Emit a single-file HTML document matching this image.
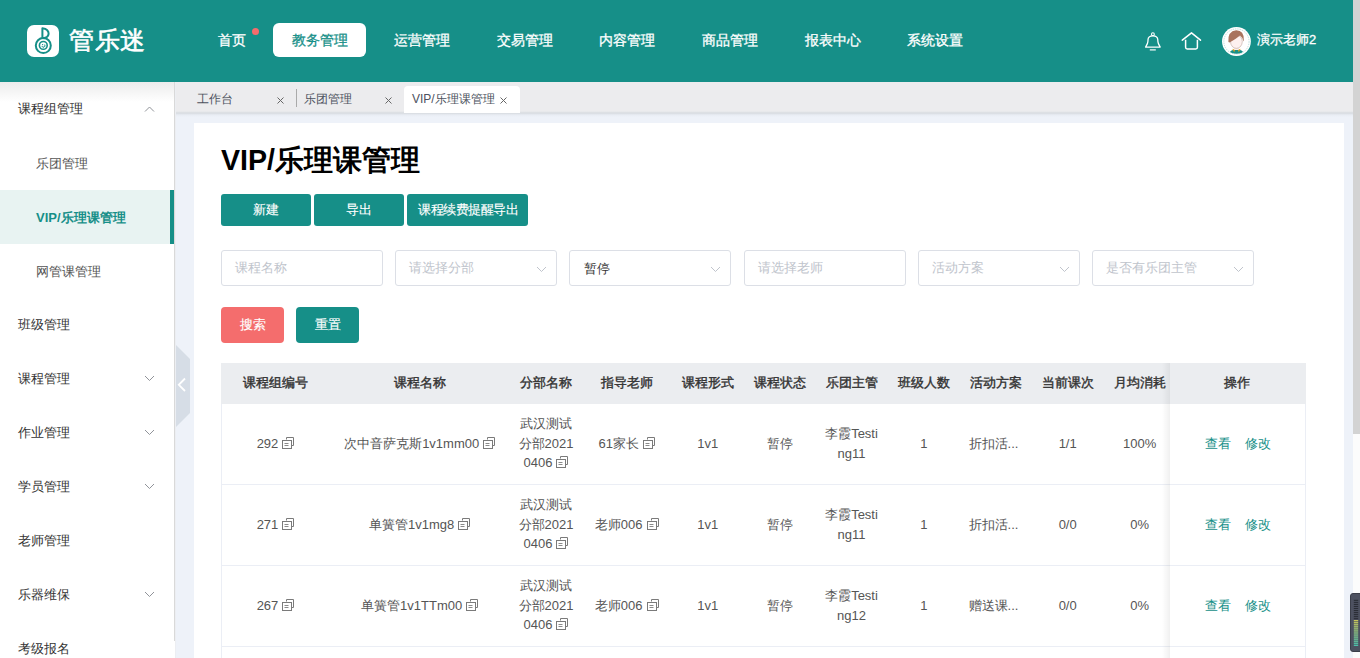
<!DOCTYPE html>
<html><head><meta charset="utf-8"><style>
*{box-sizing:border-box;margin:0;padding:0}
html,body{width:1360px;height:658px;overflow:hidden;background:#fff;font-family:"Liberation Sans",sans-serif;color:#333}
.a{position:absolute;white-space:nowrap}
.t{position:absolute;white-space:nowrap;line-height:16px}
</style></head><body>
<div class="a" style="left:0;top:0;width:1353px;height:82px;background:#168f88"></div>
<div class="a" style="left:27px;top:25px;width:32px;height:32px;background:#fff;border-radius:7px"></div>
<svg class="a" style="left:27px;top:25px" width="32" height="32" viewBox="0 0 32 32">
<circle cx="16.3" cy="20.6" r="7.5" fill="none" stroke="#168f88" stroke-width="2"/>
<circle cx="16.3" cy="20.4" r="3.9" fill="none" stroke="#168f88" stroke-width="1.6"/>
<path d="M14.9 21.3 A1.6 1.6 0 0 0 17.9 19.9" fill="none" stroke="#168f88" stroke-width="1" stroke-linecap="round"/>
<circle cx="15.6" cy="19.6" r="0.7" fill="#168f88"/>
<path d="M15.4 13 V3.2 Q21.8 4.2 21.6 8.8 Q21.2 12.6 16.2 13.2" fill="none" stroke="#168f88" stroke-width="2" stroke-linejoin="round"/>
</svg>
<div class="a" style="left:69px;top:22px;font-size:25px;font-weight:normal;-webkit-text-stroke:0.6px #fff;color:#fff;line-height:36px;letter-spacing:0.5px">管乐迷</div>
<div class="a" style="left:273px;top:23px;width:93px;height:34px;background:#fff;border-radius:6px"></div>
<div class="a" style="left:252px;top:28px;width:7px;height:7px;border-radius:50%;background:#f56c6c"></div>
<div class="t" style="left:217.5px;top:31.5px;font-size:14px;font-weight:normal;-webkit-text-stroke:0.3px currentColor;color:#fff;color:#fff">首页</div>
<div class="t" style="left:291.5px;top:31.5px;font-size:14px;font-weight:normal;-webkit-text-stroke:0.3px currentColor;color:#fff;color:#168f88">教务管理</div>
<div class="t" style="left:393.5px;top:31.5px;font-size:14px;font-weight:normal;-webkit-text-stroke:0.3px currentColor;color:#fff;color:#fff">运营管理</div>
<div class="t" style="left:496.5px;top:31.5px;font-size:14px;font-weight:normal;-webkit-text-stroke:0.3px currentColor;color:#fff;color:#fff">交易管理</div>
<div class="t" style="left:598.5px;top:31.5px;font-size:14px;font-weight:normal;-webkit-text-stroke:0.3px currentColor;color:#fff;color:#fff">内容管理</div>
<div class="t" style="left:701.5px;top:31.5px;font-size:14px;font-weight:normal;-webkit-text-stroke:0.3px currentColor;color:#fff;color:#fff">商品管理</div>
<div class="t" style="left:804.5px;top:31.5px;font-size:14px;font-weight:normal;-webkit-text-stroke:0.3px currentColor;color:#fff;color:#fff">报表中心</div>
<div class="t" style="left:906.5px;top:31.5px;font-size:14px;font-weight:normal;-webkit-text-stroke:0.3px currentColor;color:#fff;color:#fff">系统设置</div>
<svg class="a" style="left:1143px;top:31px" width="20" height="22" viewBox="0 0 20 22">
<path d="M2.6 16.1 H17.2 L15.4 12.6 Q14.8 10.9 14.8 9.2 V8.8 Q14.6 4.9 9.9 4.9 Q5.2 4.9 5 8.8 V9.2 Q5 10.9 4.4 12.6 Z" fill="none" stroke="#fff" stroke-width="1.3" stroke-linejoin="round"/>
<circle cx="9.9" cy="3.2" r="1.4" fill="none" stroke="#fff" stroke-width="1.1"/>
<path d="M6.8 18.9 H12.8" stroke="#fff" stroke-width="1.2"/>
</svg>
<svg class="a" style="left:1180px;top:31px" width="23" height="21" viewBox="0 0 23 21">
<path d="M2.3 9.2 L11.5 1.8 L20.5 9.2" fill="none" stroke="#fff" stroke-width="1.5" stroke-linejoin="round" stroke-linecap="round"/>
<path d="M5.6 8.8 V16.3 Q5.6 17.9 7.2 17.9 H15.8 Q17.4 17.9 17.4 16.3 V8.8" fill="none" stroke="#fff" stroke-width="1.5"/>
</svg>
<svg class="a" style="left:1221px;top:26px" width="31" height="31" viewBox="0 0 31 31">
<defs><clipPath id="cp"><circle cx="15.5" cy="15.5" r="12.2"/></clipPath></defs>
<circle cx="15.45" cy="15.5" r="14.4" fill="#fff"/>
<circle cx="15.45" cy="15.5" r="12.6" fill="none" stroke="#7fbdb8" stroke-width="0.5" stroke-dasharray="1.4 0.9"/>
<g clip-path="url(#cp)">
<path d="M7.5 28 Q9.5 23.6 15.5 23.6 Q21.5 23.6 23.5 28 L23.5 31 H7.5 Z" fill="#168f88"/>
<rect x="12.8" y="19.5" width="5" height="4.5" fill="#fbeeea"/>
<path d="M11.8 23.2 L13.6 24.2 L13.2 25.6 Z M19.2 23.2 L17.4 24.2 L17.8 25.6 Z" fill="#e2a21c" stroke="#e2a21c" stroke-width="0.6"/>
<ellipse cx="15.4" cy="15.6" rx="5.9" ry="6.8" fill="#fdf1ef" stroke="#8d6e63" stroke-width="0.35"/>
<path d="M7.4 16 Q6.4 5.2 15.2 4.2 Q23.2 4.4 22.8 14 L22.4 15.6 Q21.6 11.2 19 9.6 Q15.5 12.8 8.6 16.4 Z" fill="#a9735d"/>
</g>
</svg>
<div class="t" style="left:1257px;top:32px;font-size:13px;font-weight:normal;-webkit-text-stroke:0.3px #fff;color:#fff">演示老师2</div>
<div class="a" style="left:1353px;top:0;width:7px;height:658px;background:#fcfcfc"></div>
<div class="a" style="left:1353px;top:0;width:7px;height:434px;background:#d3d3d3"></div>
<div class="a" style="left:0;top:82px;width:176px;height:576px;background:#fff;border-right:1px solid #eceef2"></div>
<div class="a" style="left:174px;top:82px;width:1.3px;height:559px;background:#d9d9d9"></div>
<div class="a" style="left:0;top:82px;width:174px;height:20px;background:linear-gradient(#ececec,#fff)"></div>
<div class="a" style="left:0;top:190px;width:170px;height:54px;background:#e8f3f2"></div>
<div class="a" style="left:170px;top:190px;width:4px;height:54px;background:#168f88"></div>
<div class="t" style="left:18px;top:101px;font-size:13px;color:#333;font-weight:normal">课程组管理</div>
<svg class="a" style="left:144px;top:106px" width="11" height="7" viewBox="0 0 11 7"><path d="M1 5.5 L5.5 1 L10 5.5" fill="none" stroke="#909399" stroke-width="1"/></svg>
<div class="t" style="left:36px;top:156px;font-size:13px;color:#555;font-weight:normal">乐团管理</div>
<div class="t" style="left:36px;top:210px;font-size:13px;color:#168f88;font-weight:bold">VIP/乐理课管理</div>
<div class="t" style="left:36px;top:264px;font-size:13px;color:#555;font-weight:normal">网管课管理</div>
<div class="t" style="left:18px;top:317px;font-size:13px;color:#333;font-weight:normal">班级管理</div>
<div class="t" style="left:18px;top:371px;font-size:13px;color:#333;font-weight:normal">课程管理</div>
<svg class="a" style="left:144px;top:375px" width="11" height="7" viewBox="0 0 11 7"><path d="M1 1 L5.5 5.5 L10 1" fill="none" stroke="#909399" stroke-width="1"/></svg>
<div class="t" style="left:18px;top:425px;font-size:13px;color:#333;font-weight:normal">作业管理</div>
<svg class="a" style="left:144px;top:429px" width="11" height="7" viewBox="0 0 11 7"><path d="M1 1 L5.5 5.5 L10 1" fill="none" stroke="#909399" stroke-width="1"/></svg>
<div class="t" style="left:18px;top:479px;font-size:13px;color:#333;font-weight:normal">学员管理</div>
<svg class="a" style="left:144px;top:483px" width="11" height="7" viewBox="0 0 11 7"><path d="M1 1 L5.5 5.5 L10 1" fill="none" stroke="#909399" stroke-width="1"/></svg>
<div class="t" style="left:18px;top:533px;font-size:13px;color:#333;font-weight:normal">老师管理</div>
<div class="t" style="left:18px;top:587px;font-size:13px;color:#333;font-weight:normal">乐器维保</div>
<svg class="a" style="left:144px;top:591px" width="11" height="7" viewBox="0 0 11 7"><path d="M1 1 L5.5 5.5 L10 1" fill="none" stroke="#909399" stroke-width="1"/></svg>
<div class="t" style="left:18px;top:641px;font-size:13px;color:#333;font-weight:normal">考级报名</div>
<div class="a" style="left:176px;top:82px;width:1177px;height:31px;background:#ececee"></div>
<div class="a" style="left:176px;top:113px;width:1177px;height:545px;background:#eef2f9"></div>
<div class="a" style="left:176px;top:111px;width:1177px;height:6px;background:linear-gradient(#ebecee 0px,#e4e6e9 1px,#d6dadf 2px,#e0e4ea 3px,#e9edf4 4px,#eef2f9 6px)"></div>
<div class="a" style="left:404px;top:86px;width:116px;height:27px;background:#fff;border-radius:4px 4px 0 0"></div>
<div class="t" style="left:197px;top:91px;font-size:12px;color:#4c5260">工作台</div>
<div class="t" style="left:304px;top:91px;font-size:12px;color:#4c5260">乐团管理</div>
<div class="t" style="left:412px;top:91px;font-size:12px;color:#4c5260">VIP/乐理课管理</div>
<svg class="a" style="left:277px;top:97px" width="7" height="7" viewBox="0 0 7 7"><path d="M0.5 0.5 L6.5 6.5 M6.5 0.5 L0.5 6.5" stroke="#666" stroke-width="1"/></svg>
<svg class="a" style="left:385px;top:97px" width="7" height="7" viewBox="0 0 7 7"><path d="M0.5 0.5 L6.5 6.5 M6.5 0.5 L0.5 6.5" stroke="#666" stroke-width="1"/></svg>
<svg class="a" style="left:500px;top:97px" width="7" height="7" viewBox="0 0 7 7"><path d="M0.5 0.5 L6.5 6.5 M6.5 0.5 L0.5 6.5" stroke="#666" stroke-width="1"/></svg>
<div class="a" style="left:296px;top:89px;width:1px;height:18px;background:#aaa"></div>
<svg class="a" style="left:176px;top:345px" width="15" height="82" viewBox="0 0 15 82"><path d="M0 0 L14 14 V68 L0 82 Z" fill="#d6dde6"/><path d="M9 33.5 L2.8 39.8 L9 46" fill="none" stroke="#fff" stroke-width="1.8"/></svg>
<div class="a" style="left:194px;top:123px;width:1150px;height:535px;background:#fff"></div>
<div class="a" style="left:221px;top:140px;font-size:28.6px;font-weight:bold;color:#000;line-height:40px">VIP/乐理课管理</div>
<div class="a" style="left:221px;top:194px;width:90px;height:32px;background:#168f88;border-radius:3px;color:#fff;-webkit-text-stroke:0.15px #fff;font-size:13px;letter-spacing:0;text-indent:0;line-height:32px;text-align:center">新建</div>
<div class="a" style="left:314px;top:194px;width:90px;height:32px;background:#168f88;border-radius:3px;color:#fff;-webkit-text-stroke:0.15px #fff;font-size:13px;letter-spacing:0;text-indent:0;line-height:32px;text-align:center">导出</div>
<div class="a" style="left:407px;top:194px;width:121px;height:32px;background:#168f88;border-radius:3px;color:#fff;-webkit-text-stroke:0.15px #fff;font-size:13px;letter-spacing:-0.5px;text-indent:1.5px;line-height:32px;text-align:center">课程续费提醒导出</div>
<div class="a" style="left:221.0px;top:250px;width:162px;height:36px;border:1px solid #dcdfe6;border-radius:3px;background:#fff"></div>
<div class="t" style="left:235.0px;top:260px;font-size:13px;color:#c0c4cc">课程名称</div>
<div class="a" style="left:395.0px;top:250px;width:162px;height:36px;border:1px solid #dcdfe6;border-radius:3px;background:#fff"></div>
<div class="t" style="left:409.0px;top:260px;font-size:13px;color:#c0c4cc">请选择分部</div>
<svg class="a" style="left:536.0px;top:266px" width="11" height="7" viewBox="0 0 11 7"><path d="M1 1 L5.5 5.5 L10 1" fill="none" stroke="#c0c4cc" stroke-width="1"/></svg>
<div class="a" style="left:569.0px;top:250px;width:162px;height:36px;border:1px solid #dcdfe6;border-radius:3px;background:#fff"></div>
<div class="t" style="left:584.0px;top:260.5px;font-size:13px;color:#333">暂停</div>
<svg class="a" style="left:710.0px;top:266px" width="11" height="7" viewBox="0 0 11 7"><path d="M1 1 L5.5 5.5 L10 1" fill="none" stroke="#c0c4cc" stroke-width="1"/></svg>
<div class="a" style="left:744.0px;top:250px;width:162px;height:36px;border:1px solid #dcdfe6;border-radius:3px;background:#fff"></div>
<div class="t" style="left:758.0px;top:260px;font-size:13px;color:#c0c4cc">请选择老师</div>
<div class="a" style="left:918.0px;top:250px;width:162px;height:36px;border:1px solid #dcdfe6;border-radius:3px;background:#fff"></div>
<div class="t" style="left:932.0px;top:260px;font-size:13px;color:#c0c4cc">活动方案</div>
<svg class="a" style="left:1059.0px;top:266px" width="11" height="7" viewBox="0 0 11 7"><path d="M1 1 L5.5 5.5 L10 1" fill="none" stroke="#c0c4cc" stroke-width="1"/></svg>
<div class="a" style="left:1092.0px;top:250px;width:162px;height:36px;border:1px solid #dcdfe6;border-radius:3px;background:#fff"></div>
<div class="t" style="left:1106.0px;top:260px;font-size:13px;color:#c0c4cc">是否有乐团主管</div>
<svg class="a" style="left:1233.0px;top:266px" width="11" height="7" viewBox="0 0 11 7"><path d="M1 1 L5.5 5.5 L10 1" fill="none" stroke="#c0c4cc" stroke-width="1"/></svg>
<div class="a" style="left:221px;top:307px;width:63px;height:36px;background:#f46d6d;border-radius:4px;color:#fff;-webkit-text-stroke:0.15px #fff;font-size:13px;line-height:36px;text-align:center">搜索</div>
<div class="a" style="left:296px;top:307px;width:63px;height:36px;background:#168f88;border-radius:4px;color:#fff;-webkit-text-stroke:0.15px #fff;font-size:13px;line-height:36px;text-align:center">重置</div>
<div class="a" style="left:221px;top:363px;width:1085px;height:41px;background:#ebedf0"></div>
<div class="a" style="left:221px;top:404px;width:1px;height:254px;background:#ebeef5"></div>
<div class="a" style="left:1305px;top:404px;width:1px;height:254px;background:#ebeef5"></div>
<div class="a" style="left:221px;top:484px;width:1085px;height:1px;background:#ebeef5"></div>
<div class="a" style="left:221px;top:565px;width:1085px;height:1px;background:#ebeef5"></div>
<div class="a" style="left:221px;top:646px;width:1085px;height:1px;background:#ebeef5"></div>
<div class="t" style="left:225.5px;top:375px;width:100px;font-size:13px;font-weight:normal;-webkit-text-stroke:0.4px #333;color:#333;text-align:center">课程组编号</div>
<div class="t" style="left:369.7px;top:375px;width:100px;font-size:13px;font-weight:normal;-webkit-text-stroke:0.4px #333;color:#333;text-align:center">课程名称</div>
<div class="t" style="left:496px;top:375px;width:100px;font-size:13px;font-weight:normal;-webkit-text-stroke:0.4px #333;color:#333;text-align:center">分部名称</div>
<div class="t" style="left:576.7px;top:375px;width:100px;font-size:13px;font-weight:normal;-webkit-text-stroke:0.4px #333;color:#333;text-align:center">指导老师</div>
<div class="t" style="left:657.7px;top:375px;width:100px;font-size:13px;font-weight:normal;-webkit-text-stroke:0.4px #333;color:#333;text-align:center">课程形式</div>
<div class="t" style="left:730px;top:375px;width:100px;font-size:13px;font-weight:normal;-webkit-text-stroke:0.4px #333;color:#333;text-align:center">课程状态</div>
<div class="t" style="left:801.5px;top:375px;width:100px;font-size:13px;font-weight:normal;-webkit-text-stroke:0.4px #333;color:#333;text-align:center">乐团主管</div>
<div class="t" style="left:873.8px;top:375px;width:100px;font-size:13px;font-weight:normal;-webkit-text-stroke:0.4px #333;color:#333;text-align:center">班级人数</div>
<div class="t" style="left:945.5px;top:375px;width:100px;font-size:13px;font-weight:normal;-webkit-text-stroke:0.4px #333;color:#333;text-align:center">活动方案</div>
<div class="t" style="left:1017.7px;top:375px;width:100px;font-size:13px;font-weight:normal;-webkit-text-stroke:0.4px #333;color:#333;text-align:center">当前课次</div>
<div class="t" style="left:1089.7px;top:375px;width:100px;font-size:13px;font-weight:normal;-webkit-text-stroke:0.4px #333;color:#333;text-align:center">月均消耗</div>
<div class="a" style="left:1162px;top:363px;width:8px;height:295px;background:linear-gradient(90deg,rgba(0,0,0,0),rgba(0,0,0,0.06))"></div>
<div class="a" style="left:1170px;top:363px;width:136px;height:41px;background:#ebedf0"></div>
<div class="a" style="left:1170px;top:404px;width:135px;height:254px;background:#fff"></div>
<div class="a" style="left:1170px;top:484px;width:136px;height:1px;background:#ebeef5"></div>
<div class="a" style="left:1170px;top:565px;width:136px;height:1px;background:#ebeef5"></div>
<div class="a" style="left:1170px;top:646px;width:136px;height:1px;background:#ebeef5"></div>
<div class="t" style="left:1187px;top:375px;width:100px;font-size:13px;font-weight:normal;-webkit-text-stroke:0.4px #333;color:#333;text-align:center">操作</div>
<div class="t" style="left:215.5px;top:436px;width:120px;font-size:13px;color:#555;text-align:center">292<svg width="12" height="12" viewBox="0 0 12 12" style="display:inline-block;vertical-align:-1px;margin-left:4px"><path d="M4.5 2.5 V0.5 H11.5 V8.5 H9.5" fill="none" stroke="#7a7a7a" stroke-width="1"/><rect x="0.5" y="3.5" width="9" height="8" fill="#fff" stroke="#7a7a7a" stroke-width="1"/><path d="M2.5 6.5 H6.5 M2.5 8.5 H6.5" stroke="#8a8a8a" stroke-width="1"/></svg></div>
<div class="t" style="left:329.7px;top:436px;width:180px;font-size:13px;color:#555;text-align:center">次中音萨克斯1v1mm00<svg width="12" height="12" viewBox="0 0 12 12" style="display:inline-block;vertical-align:-1px;margin-left:4px"><path d="M4.5 2.5 V0.5 H11.5 V8.5 H9.5" fill="none" stroke="#7a7a7a" stroke-width="1"/><rect x="0.5" y="3.5" width="9" height="8" fill="#fff" stroke="#7a7a7a" stroke-width="1"/><path d="M2.5 6.5 H6.5 M2.5 8.5 H6.5" stroke="#8a8a8a" stroke-width="1"/></svg></div>
<div class="a" style="left:501px;top:414px;width:90px;font-size:13px;color:#555;text-align:center;line-height:19.6px">武汉测试<br>分部2021<br>0406<svg width="12" height="12" viewBox="0 0 12 12" style="display:inline-block;vertical-align:-1px;margin-left:4px"><path d="M4.5 2.5 V0.5 H11.5 V8.5 H9.5" fill="none" stroke="#7a7a7a" stroke-width="1"/><rect x="0.5" y="3.5" width="9" height="8" fill="#fff" stroke="#7a7a7a" stroke-width="1"/><path d="M2.5 6.5 H6.5 M2.5 8.5 H6.5" stroke="#8a8a8a" stroke-width="1"/></svg></div>
<div class="t" style="left:581.7px;top:436px;width:90px;font-size:13px;color:#555;text-align:center">61家长<svg width="12" height="12" viewBox="0 0 12 12" style="display:inline-block;vertical-align:-1px;margin-left:4px"><path d="M4.5 2.5 V0.5 H11.5 V8.5 H9.5" fill="none" stroke="#7a7a7a" stroke-width="1"/><rect x="0.5" y="3.5" width="9" height="8" fill="#fff" stroke="#7a7a7a" stroke-width="1"/><path d="M2.5 6.5 H6.5 M2.5 8.5 H6.5" stroke="#8a8a8a" stroke-width="1"/></svg></div>
<div class="t" style="left:671.7px;top:436px;width:72px;font-size:13px;color:#555;text-align:center">1v1</div>
<div class="t" style="left:744px;top:436px;width:72px;font-size:13px;color:#555;text-align:center">暂停</div>
<div class="a" style="left:815.5px;top:424px;width:72px;font-size:13px;color:#555;text-align:center;line-height:19.6px">李霞Testi<br>ng11</div>
<div class="t" style="left:887.8px;top:436px;width:72px;font-size:13px;color:#555;text-align:center">1</div>
<div class="t" style="left:957.5px;top:436px;width:72px;font-size:13px;color:#555;text-align:center">折扣活...</div>
<div class="t" style="left:1031.7px;top:436px;width:72px;font-size:13px;color:#555;text-align:center">1/1</div>
<div class="t" style="left:1103.7px;top:436px;width:72px;font-size:13px;color:#555;text-align:center">100%</div>
<div class="t" style="left:1205px;top:436px;font-size:13px;color:#168f88">查看</div>
<div class="t" style="left:1245px;top:436px;font-size:13px;color:#168f88">修改</div>
<div class="t" style="left:215.5px;top:517px;width:120px;font-size:13px;color:#555;text-align:center">271<svg width="12" height="12" viewBox="0 0 12 12" style="display:inline-block;vertical-align:-1px;margin-left:4px"><path d="M4.5 2.5 V0.5 H11.5 V8.5 H9.5" fill="none" stroke="#7a7a7a" stroke-width="1"/><rect x="0.5" y="3.5" width="9" height="8" fill="#fff" stroke="#7a7a7a" stroke-width="1"/><path d="M2.5 6.5 H6.5 M2.5 8.5 H6.5" stroke="#8a8a8a" stroke-width="1"/></svg></div>
<div class="t" style="left:329.7px;top:517px;width:180px;font-size:13px;color:#555;text-align:center">单簧管1v1mg8<svg width="12" height="12" viewBox="0 0 12 12" style="display:inline-block;vertical-align:-1px;margin-left:4px"><path d="M4.5 2.5 V0.5 H11.5 V8.5 H9.5" fill="none" stroke="#7a7a7a" stroke-width="1"/><rect x="0.5" y="3.5" width="9" height="8" fill="#fff" stroke="#7a7a7a" stroke-width="1"/><path d="M2.5 6.5 H6.5 M2.5 8.5 H6.5" stroke="#8a8a8a" stroke-width="1"/></svg></div>
<div class="a" style="left:501px;top:495px;width:90px;font-size:13px;color:#555;text-align:center;line-height:19.6px">武汉测试<br>分部2021<br>0406<svg width="12" height="12" viewBox="0 0 12 12" style="display:inline-block;vertical-align:-1px;margin-left:4px"><path d="M4.5 2.5 V0.5 H11.5 V8.5 H9.5" fill="none" stroke="#7a7a7a" stroke-width="1"/><rect x="0.5" y="3.5" width="9" height="8" fill="#fff" stroke="#7a7a7a" stroke-width="1"/><path d="M2.5 6.5 H6.5 M2.5 8.5 H6.5" stroke="#8a8a8a" stroke-width="1"/></svg></div>
<div class="t" style="left:581.7px;top:517px;width:90px;font-size:13px;color:#555;text-align:center">老师006<svg width="12" height="12" viewBox="0 0 12 12" style="display:inline-block;vertical-align:-1px;margin-left:4px"><path d="M4.5 2.5 V0.5 H11.5 V8.5 H9.5" fill="none" stroke="#7a7a7a" stroke-width="1"/><rect x="0.5" y="3.5" width="9" height="8" fill="#fff" stroke="#7a7a7a" stroke-width="1"/><path d="M2.5 6.5 H6.5 M2.5 8.5 H6.5" stroke="#8a8a8a" stroke-width="1"/></svg></div>
<div class="t" style="left:671.7px;top:517px;width:72px;font-size:13px;color:#555;text-align:center">1v1</div>
<div class="t" style="left:744px;top:517px;width:72px;font-size:13px;color:#555;text-align:center">暂停</div>
<div class="a" style="left:815.5px;top:505px;width:72px;font-size:13px;color:#555;text-align:center;line-height:19.6px">李霞Testi<br>ng11</div>
<div class="t" style="left:887.8px;top:517px;width:72px;font-size:13px;color:#555;text-align:center">1</div>
<div class="t" style="left:957.5px;top:517px;width:72px;font-size:13px;color:#555;text-align:center">折扣活...</div>
<div class="t" style="left:1031.7px;top:517px;width:72px;font-size:13px;color:#555;text-align:center">0/0</div>
<div class="t" style="left:1103.7px;top:517px;width:72px;font-size:13px;color:#555;text-align:center">0%</div>
<div class="t" style="left:1205px;top:517px;font-size:13px;color:#168f88">查看</div>
<div class="t" style="left:1245px;top:517px;font-size:13px;color:#168f88">修改</div>
<div class="t" style="left:215.5px;top:598px;width:120px;font-size:13px;color:#555;text-align:center">267<svg width="12" height="12" viewBox="0 0 12 12" style="display:inline-block;vertical-align:-1px;margin-left:4px"><path d="M4.5 2.5 V0.5 H11.5 V8.5 H9.5" fill="none" stroke="#7a7a7a" stroke-width="1"/><rect x="0.5" y="3.5" width="9" height="8" fill="#fff" stroke="#7a7a7a" stroke-width="1"/><path d="M2.5 6.5 H6.5 M2.5 8.5 H6.5" stroke="#8a8a8a" stroke-width="1"/></svg></div>
<div class="t" style="left:329.7px;top:598px;width:180px;font-size:13px;color:#555;text-align:center">单簧管1v1TTm00<svg width="12" height="12" viewBox="0 0 12 12" style="display:inline-block;vertical-align:-1px;margin-left:4px"><path d="M4.5 2.5 V0.5 H11.5 V8.5 H9.5" fill="none" stroke="#7a7a7a" stroke-width="1"/><rect x="0.5" y="3.5" width="9" height="8" fill="#fff" stroke="#7a7a7a" stroke-width="1"/><path d="M2.5 6.5 H6.5 M2.5 8.5 H6.5" stroke="#8a8a8a" stroke-width="1"/></svg></div>
<div class="a" style="left:501px;top:576px;width:90px;font-size:13px;color:#555;text-align:center;line-height:19.6px">武汉测试<br>分部2021<br>0406<svg width="12" height="12" viewBox="0 0 12 12" style="display:inline-block;vertical-align:-1px;margin-left:4px"><path d="M4.5 2.5 V0.5 H11.5 V8.5 H9.5" fill="none" stroke="#7a7a7a" stroke-width="1"/><rect x="0.5" y="3.5" width="9" height="8" fill="#fff" stroke="#7a7a7a" stroke-width="1"/><path d="M2.5 6.5 H6.5 M2.5 8.5 H6.5" stroke="#8a8a8a" stroke-width="1"/></svg></div>
<div class="t" style="left:581.7px;top:598px;width:90px;font-size:13px;color:#555;text-align:center">老师006<svg width="12" height="12" viewBox="0 0 12 12" style="display:inline-block;vertical-align:-1px;margin-left:4px"><path d="M4.5 2.5 V0.5 H11.5 V8.5 H9.5" fill="none" stroke="#7a7a7a" stroke-width="1"/><rect x="0.5" y="3.5" width="9" height="8" fill="#fff" stroke="#7a7a7a" stroke-width="1"/><path d="M2.5 6.5 H6.5 M2.5 8.5 H6.5" stroke="#8a8a8a" stroke-width="1"/></svg></div>
<div class="t" style="left:671.7px;top:598px;width:72px;font-size:13px;color:#555;text-align:center">1v1</div>
<div class="t" style="left:744px;top:598px;width:72px;font-size:13px;color:#555;text-align:center">暂停</div>
<div class="a" style="left:815.5px;top:586px;width:72px;font-size:13px;color:#555;text-align:center;line-height:19.6px">李霞Testi<br>ng12</div>
<div class="t" style="left:887.8px;top:598px;width:72px;font-size:13px;color:#555;text-align:center">1</div>
<div class="t" style="left:957.5px;top:598px;width:72px;font-size:13px;color:#555;text-align:center">赠送课...</div>
<div class="t" style="left:1031.7px;top:598px;width:72px;font-size:13px;color:#555;text-align:center">0/0</div>
<div class="t" style="left:1103.7px;top:598px;width:72px;font-size:13px;color:#555;text-align:center">0%</div>
<div class="t" style="left:1205px;top:598px;font-size:13px;color:#168f88">查看</div>
<div class="t" style="left:1245px;top:598px;font-size:13px;color:#168f88">修改</div>
<svg class="a" style="left:1350px;top:593px" width="10" height="59" viewBox="0 0 10 59"><rect x="0.5" y="0.5" width="14" height="58" rx="2.5" fill="#4d5160" stroke="#3b3e49"/><rect x="3.8" y="6.80" width="4.4" height="1.1" fill="#2a2d35"/><rect x="3.8" y="8.84" width="4.4" height="1.1" fill="#2a2d35"/><rect x="3.8" y="10.88" width="4.4" height="1.1" fill="#2a2d35"/><rect x="3.8" y="12.92" width="4.4" height="1.1" fill="#2a2d35"/><rect x="3.8" y="14.96" width="4.4" height="1.1" fill="#2a2d35"/><rect x="3.8" y="17.00" width="4.4" height="1.1" fill="#2a2d35"/><rect x="3.8" y="19.04" width="4.4" height="1.1" fill="#2a2d35"/><rect x="3.8" y="21.08" width="4.4" height="1.1" fill="#2a2d35"/><rect x="3.8" y="23.12" width="4.4" height="1.1" fill="#2a2d35"/><rect x="3.8" y="25.16" width="4.4" height="1.1" fill="#2a2d35"/><rect x="3.8" y="27.20" width="4.4" height="1.1" fill="#e8e45a"/><rect x="3.8" y="29.24" width="4.4" height="1.1" fill="#dbe362"/><rect x="3.8" y="31.28" width="4.4" height="1.1" fill="#cee36a"/><rect x="3.8" y="33.32" width="4.4" height="1.1" fill="#c1e273"/><rect x="3.8" y="35.36" width="4.4" height="1.1" fill="#b4e27b"/><rect x="3.8" y="37.40" width="4.4" height="1.1" fill="#a7e183"/><rect x="3.8" y="39.44" width="4.4" height="1.1" fill="#9ae18c"/><rect x="3.8" y="41.48" width="4.4" height="1.1" fill="#8de094"/><rect x="3.8" y="43.52" width="4.4" height="1.1" fill="#80e09c"/><rect x="3.8" y="45.56" width="4.4" height="1.1" fill="#73dfa5"/><rect x="3.8" y="47.60" width="4.4" height="1.1" fill="#66dfad"/><rect x="3.8" y="49.64" width="4.4" height="1.1" fill="#59deb5"/><rect x="3.8" y="51.68" width="4.4" height="1.1" fill="#4cdebe"/></svg>
</body></html>
